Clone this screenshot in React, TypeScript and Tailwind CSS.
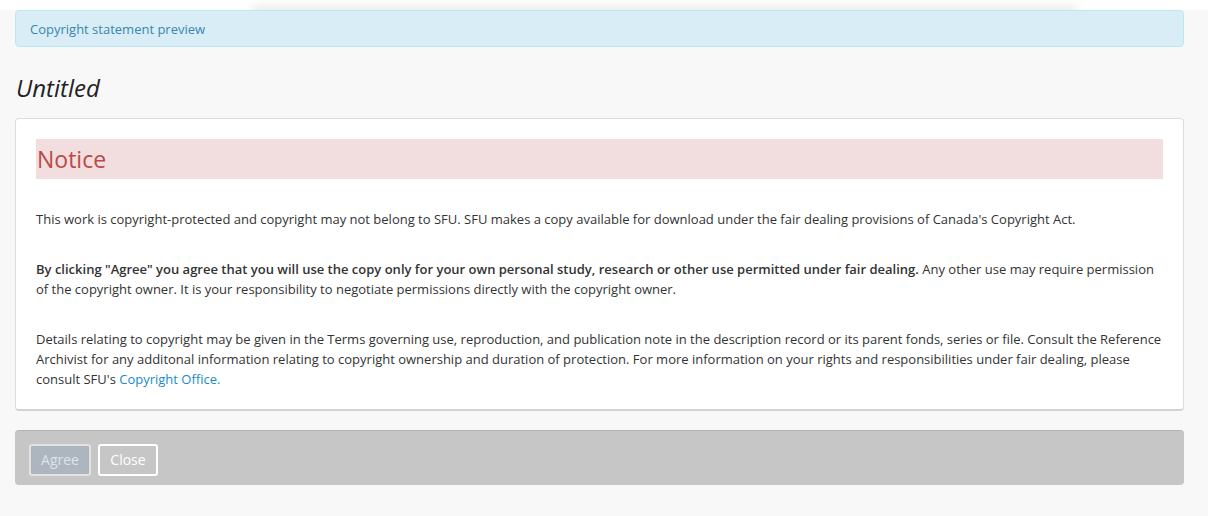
import React from "react"

const font = { fontFamily: '"Open Sans", "Liberation Sans", sans-serif' }

export default function App() {
  return (
    <div
      className="min-h-[516px] bg-[#f8f8f8] pl-[15px] pr-[24px] text-[13px] leading-[20px] text-[#333]"
      style={font}
    >
      {/* shadow of the element above */}
      <div className="ml-[240px] mr-[110px] h-0 shadow-[0_0_8px_3px_rgba(0,0,0,0.12)]" />

      <div className="mt-[10px] flex h-[37px] items-center rounded-[4px] border border-[#bce8f1] bg-[#d9edf7] px-[14px] text-[#3a87ad]">
        Copyright statement preview
      </div>

      <h1 className="mt-[27px] mb-[16px] pl-[1px] text-[24px] leading-[28px] italic text-[#222]">
        Untitled
      </h1>

      <div className="rounded-[4px] border border-[#ddd] border-b-2 border-b-[#d3d3d3] bg-white px-[20px] pt-[20px] pb-[20px]">
        <div className="flex h-[40px] items-center bg-[#f2dede] pl-[1px] text-[23px] text-[#b94a48]">
          Notice
        </div>
        <p className="mt-[30px]">
          This work is copyright-protected and copyright may not belong to SFU.
          SFU makes a copy available for download under the fair dealing
          provisions of Canada's Copyright Act.
        </p>
        <p className="mt-[30px]">
          <strong className="font-semibold">
            By clicking "Agree" you agree that you will use the copy only for
            your own personal study, research or other use permitted under fair
            dealing.
          </strong>{" "}
          Any other use may require permission of the copyright owner. It is
          your responsibility to negotiate permissions directly with the
          copyright owner.
        </p>
        <p className="mt-[30px]">
          Details relating to copyright may be given in the Terms governing
          use, reproduction, and publication note in the description record or
          its parent fonds, series or file. Consult the Reference Archivist for
          any additonal information relating to copyright ownership and
          duration of protection. For more information on your rights and
          responsibilities under fair dealing, please consult SFU's{" "}
          <a href="#" className="text-[#1a8bc8]">
            Copyright Office.
          </a>
        </p>
      </div>

      <div className="mt-[19px] flex h-[55px] items-start gap-[7px] rounded-[4px] border-t border-t-[#b5b5b5] bg-[#c6c6c6] px-[14px] pt-[13px]">
        <button className="h-[32px] w-[62px] rounded-[3px] border-2 border-[#e2e2e2] bg-[#adb5bf] text-[14px] text-[#dfe3e8]">
          Agree
        </button>
        <button className="h-[32px] w-[60px] rounded-[3px] border-2 border-white bg-transparent text-[14px] text-white">
          Close
        </button>
      </div>
    </div>
  )
}
